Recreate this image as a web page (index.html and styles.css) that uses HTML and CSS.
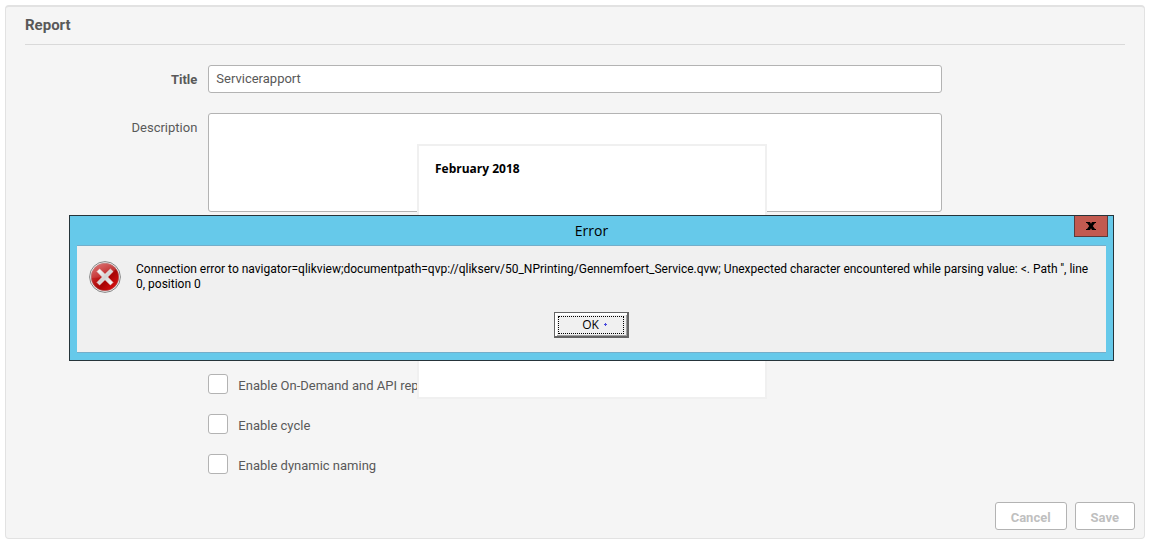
FILE: index.html
```html
<!DOCTYPE html>
<html lang="en">
<head>
<meta charset="utf-8">
<meta name="viewport" content="width=device-width, initial-scale=1">
<title>Report</title>
<link rel="stylesheet" href="styles.css">
</head>
<body>
<main class="panel">
  <h1 class="panel-title">Report</h1>
  <form class="form">
    <div class="row">
      <label class="label required" for="title">Title</label>
      <input class="field" id="title" type="text" value="Servicerapport">
    </div>
    <div class="row">
      <label class="label" for="description">Description</label>
      <textarea class="field area" id="description"></textarea>
    </div>
    <div class="row options-row">
      <div class="options">
        <label class="option"><input class="check" type="checkbox"><span>Enable On-Demand and API rep</span></label>
        <label class="option"><input class="check" type="checkbox"><span>Enable cycle</span></label>
        <label class="option"><input class="check" type="checkbox"><span>Enable dynamic naming</span></label>
      </div>
    </div>
    <div class="actions">
      <button class="button" type="button">Cancel</button>
      <button class="button" type="button">Save</button>
    </div>
  </form>
</main>

<section class="preview">
  <h2 class="preview-title">February 2018</h2>
</section>

<section class="dialog" role="alertdialog" aria-labelledby="dialog-title">
  <header class="dialog-bar">
    <h2 class="dialog-title" id="dialog-title">Error</h2>
    <button class="close" type="button" aria-label="Close">
      <svg width="10" height="8" viewBox="0 0 10 8" aria-hidden="true"><path d="M0 0h4l1 1.800L6 0h4v1H9L6.800 4 9 7h1v1H6L5 6.200 4 8H0V7h1l2.200-3L1 1H0z"/></svg>
    </button>
  </header>
  <div class="dialog-body">
    <div class="message">
      <svg class="error-icon" width="32" height="32" viewBox="0 0 32 32" aria-hidden="true">
        <defs>
          <linearGradient id="red" x1="0" y1="0" x2="1" y2="1">
            <stop offset="0" stop-color="#d85050"/>
            <stop offset=".45" stop-color="#b91212"/>
            <stop offset=".6" stop-color="#a80505"/>
            <stop offset="1" stop-color="#ee1515"/>
          </linearGradient>
          <linearGradient id="shine" x1="0" y1="0" x2="0" y2="1">
            <stop offset="0" stop-color="#fff" stop-opacity=".25"/>
            <stop offset="1" stop-color="#fff" stop-opacity=".1"/>
          </linearGradient>
          <linearGradient id="cross" x1="0" y1="0" x2="1" y2="1">
            <stop offset="0" stop-color="#fff"/>
            <stop offset=".5" stop-color="#d4d4d4"/>
            <stop offset="1" stop-color="#fff"/>
          </linearGradient>
        </defs>
        <circle cx="16" cy="16" r="15.400" fill="#f4f4f4" stroke="#858585"/>
        <circle cx="16" cy="16" r="13.800" fill="url(#red)" stroke="#a96060" stroke-width=".6"/>
        <path d="M2.500 17A13.500 13.500 0 0 1 27 8Q19 17 2.500 17z" fill="url(#shine)"/>
        <path d="M10.600 8 16 13.300 21.400 8 24 10.600 18.700 16 24 21.400 21.400 24 16 18.700 10.600 24 8 21.400 13.300 16 8 10.600z" fill="url(#cross)" stroke="#e8e8e8" stroke-width=".6" stroke-linejoin="round"/>
      </svg>
      <p class="message-text">Connection error to navigator=qlikview;documentpath=qvp://qlikserv/50_NPrinting/Gennemfoert_Service.qvw; Unexpected character encountered while parsing value: &lt;. Path '', line 0, position 0</p>
    </div>
    <button class="ok" type="button"><span class="ok-focus">OK<svg class="ok-dot" width="3" height="3" viewBox="0 0 3 3" aria-hidden="true"><path d="M1 0h1v1h1v1H2v1H1V2H0V1h1z"/></svg></span></button>
  </div>
</section>
</body>
</html>
```
FILE: styles.css
```css
* {
  box-sizing: border-box;
}

body {
  margin: 5px 6px 7px 5px;
  background: #fff;
  color: #595959;
  font-family: Roboto, sans-serif;
  font-size: 13px;
  line-height: 18px;
}

.panel {
  padding: 9px 19px 8px;
  background: #f5f5f5;
  border: 1px solid #e2e2e2;
  border-top-width: 2px;
  border-radius: 4px;
}

.panel-title {
  margin: 0;
  padding-bottom: 10px;
  border-bottom: 1px solid #d9d9d9;
  font-size: 15px;
  line-height: 18px;
}

.form {
  padding-top: 20px;
}

.row {
  display: grid;
  grid-template-columns: 2fr 8fr 2fr;
  margin-bottom: 20px;
}

.label {
  padding: 6px 11px 0 0;
  text-align: right;
}

.required {
  font-weight: 700;
}

.field {
  width: 100%;
  height: 28px;
  margin: 0;
  padding: 0 7px 2px;
  background: #fff;
  border: 1px solid #b3b3b3;
  border-radius: 3px;
  color: #595959;
  font: inherit;
}

.area {
  display: block;
  height: 99px;
  resize: none;
}

.options-row {
  margin: 162px 0 28px;
}

.options {
  display: grid;
  grid-column: 2;
  gap: 20px;
}

.option {
  display: flex;
  gap: 10px;
  line-height: 20px;
}

.option span {
  padding-top: 2px;
  height: 20px;
}

.check {
  width: 20px;
  height: 20px;
  margin: 0;
  appearance: none;
  background: #fff;
  border: 1px solid #b3b3b3;
  border-radius: 3px;
}

.actions {
  display: flex;
  justify-content: flex-end;
  gap: 8px;
  margin-right: -10px;
}

.button {
  height: 28px;
  padding: 3px 15px 0;
  background: #fff;
  border: 1px solid #b3b3b3;
  border-radius: 3px;
  color: #bfbfbf;
  font: 700 13px/18px Roboto, sans-serif;
}

.preview {
  position: absolute;
  top: 144px;
  left: 417px;
  width: 350px;
  height: 255px;
  padding: 15px 16px;
  background: #fff;
  border: 2px solid #f0f0f0;
}

.preview-title {
  margin: 0;
  color: #000;
  font: 700 12px/16px "Open Sans", sans-serif;
}

.dialog {
  position: absolute;
  top: 215px;
  left: 69px;
  right: 37px;
  padding: 0 7px 7px;
  background: #66c9ea;
  border: 1px solid #26343a;
  color: #000;
}

.dialog-bar {
  display: grid;
  grid-template-columns: 1fr auto 1fr;
  height: 29px;
}

.dialog-title {
  grid-column: 2;
  margin: 0;
  font: 400 14px/30px "Open Sans", sans-serif;
}

.close {
  display: grid;
  place-items: center;
  justify-self: end;
  width: 34px;
  height: 21px;
  margin-right: -2px;
  padding: 0;
  background: #c25a50;
  border: 1px solid #5c3b3c;
  border-top: 0;
}

.dialog-body {
  display: flex;
  flex-direction: column;
  align-items: center;
  padding: 15px 11px 14px;
  background: #f0f0f0;
  border: solid #74aeca;
  border-width: 1px 0;
}

.message {
  display: flex;
  gap: 15px;
  width: 100%;
  margin-bottom: 19px;
  padding-left: 1px;
}

.error-icon {
  flex: none;
}

.message-text {
  margin: 0;
  padding-top: 1px;
  font: 12px/15px Roboto, sans-serif;
}

.ok {
  width: 75px;
  height: 26px;
  padding: 2px;
  background: #f0f0f0;
  border: 1px solid #646464;
  border-width: 1px 2px 2px 1px;
  box-shadow: inset 2px 2px #fff, inset -1px -1px #a0a0a0;
  color: #000;
  font: 12px/16px "Open Sans", sans-serif;
}

.ok-focus {
  display: flex;
  justify-content: center;
  gap: 5px;
  height: 18px;
  margin: 0 1px;
  padding-left: 7px;
  border: 1px dotted #000;
}

.ok-dot {
  margin-top: 6px;
  fill: #4848dc;
}
```
